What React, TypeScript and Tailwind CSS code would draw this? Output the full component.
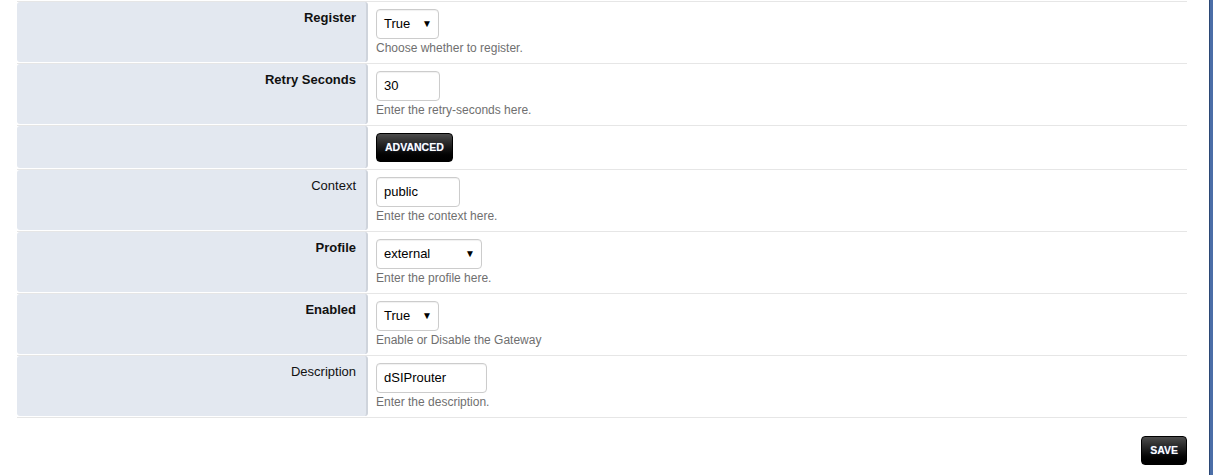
import React from "react";

// Gateway settings form: label column on the left, controls with help text on the right.

type Row =
  | { kind: "select"; label: string; bold: boolean; value: string; width: number; help: string }
  | { kind: "input"; label: string; bold: boolean; value: string; width: number; help: string }
  | { kind: "button"; label: string; bold: boolean; text: string };

const ROWS: Row[] = [
  { kind: "select", label: "Register", bold: true, value: "True", width: 63, help: "Choose whether to register." },
  { kind: "input", label: "Retry Seconds", bold: true, value: "30", width: 64, help: "Enter the retry-seconds here." },
  { kind: "button", label: "", bold: false, text: "ADVANCED" },
  { kind: "input", label: "Context", bold: false, value: "public", width: 84, help: "Enter the context here." },
  { kind: "select", label: "Profile", bold: true, value: "external", width: 106, help: "Enter the profile here." },
  { kind: "select", label: "Enabled", bold: true, value: "True", width: 63, help: "Enable or Disable the Gateway" },
  { kind: "input", label: "Description", bold: false, value: "dSIProuter", width: 111, help: "Enter the description." },
];

function DarkButton({ children }: { children: React.ReactNode }) {
  return (
    <button
      type="button"
      className="h-[29px] rounded-[4px] border border-black bg-gradient-to-b from-[#4d4d4d] via-[#1a1a1a] to-black px-[8px] text-[10.5px] font-bold text-white [text-shadow:0_0_1px_rgba(120,170,255,0.6)]"
    >
      {children}
    </button>
  );
}

function FieldControl({ row }: { row: Row }) {
  if (row.kind === "button") {
    return <DarkButton>{row.text}</DarkButton>;
  }
  const box =
    "flex h-[30px] items-center rounded-[4px] border border-[#cccccc] bg-white pl-[7px] text-[13px] text-black shadow-[inset_0_1px_1px_rgba(0,0,0,0.06)]";
  return (
    <div>
      {row.kind === "select" ? (
        <div className={`${box} justify-between pr-[6px]`} style={{ width: row.width }}>
          <span>{row.value}</span>
          <span className="text-[10px] leading-none">▼</span>
        </div>
      ) : (
        <div className={box} style={{ width: row.width }}>
          {row.value}
        </div>
      )}
      <div className="mt-[1px] text-[12px] leading-[16px] text-[#6f6f6f]">{row.help}</div>
    </div>
  );
}

export default function App() {
  return (
    <div className="flex h-[475px] w-full bg-white font-['Liberation_Sans',Arial,sans-serif]">
      <div className="flex-1 pl-[17px] pr-[22px] pt-[1px]">
        <div className="border-b border-[#e6e6e6]">
          {ROWS.map((row, i) => (
            <div key={i} className={`flex border-t border-[#e6e6e6] ${row.kind === "button" ? "h-[44px]" : "h-[62px]"}`}>
              <div className="mb-[1px] w-[351px] rounded-[3px] border-r-[2px] border-[#cfd4dc] bg-[#e3e8f0] pr-[10px] pt-[7px] text-right text-[13px] leading-[18px] text-[#111]">
                <span className={row.bold ? "font-bold" : "font-normal"}>{row.label}</span>
              </div>
              <div className="flex-1 pl-[8px] pt-[7px]">
                <FieldControl row={row} />
              </div>
            </div>
          ))}
        </div>
        <div className="mt-[18px] flex justify-end">
          <div className="h-[30px]">
            <DarkButton>SAVE</DarkButton>
          </div>
        </div>
      </div>
      <div className="w-[4px] border-l border-[#2b4775] bg-[#4b6ea7]" />
    </div>
  );
}
